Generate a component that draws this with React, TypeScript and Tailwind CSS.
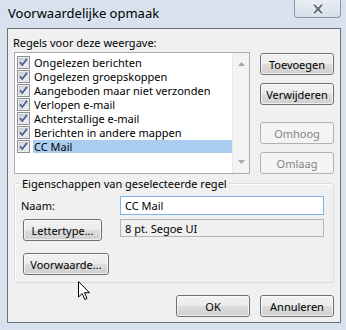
import React from "react";

const FONT = { fontFamily: '"Noto Sans", "Open Sans", sans-serif' };

function CheckBox() {
  return (
    <svg width="13" height="13" viewBox="0 0 13 13" className="shrink-0">
      <defs>
        <linearGradient id="cbg" x1="0" y1="0" x2="1" y2="1">
          <stop offset="0" stopColor="#cbcfd5" />
          <stop offset="1" stopColor="#f6f6f6" />
        </linearGradient>
      </defs>
      <rect x="0.5" y="0.5" width="12" height="12" fill="#fff" stroke="#8e8f8f" />
      <rect x="2" y="2" width="9" height="9" fill="url(#cbg)" stroke="#b0b4ba" strokeWidth="0.5" />
      <path d="M3 6.2 L5.3 9 L10 2.8" fill="none" stroke="#4a5f97" strokeWidth="1.8" strokeLinejoin="round" />
    </svg>
  );
}

function Btn({ children, w = 74, disabled = false }: { children: React.ReactNode; w?: number; disabled?: boolean }) {
  return (
    <div
      className={
        "h-[22px] rounded-[3px] border flex items-center justify-center shrink-0 " +
        (disabled
          ? "border-[#adb2b5] bg-[#f4f4f4] text-[#838383]"
          : "border-[#707070] bg-[linear-gradient(to_bottom,#f2f2f2_0%,#ebebeb_50%,#dddddd_50%,#cfcfcf_100%)] text-black")
      }
      style={{ width: w }}
    >
      <div className={"w-full h-full rounded-[2px] border flex items-center justify-center " + (disabled ? "border-transparent" : "border-[#fcfcfc]/70")}>
        {children}
      </div>
    </div>
  );
}

const items = [
  "Ongelezen berichten",
  "Ongelezen groepskoppen",
  "Aangeboden maar niet verzonden",
  "Verlopen e-mail",
  "Achterstallige e-mail",
  "Berichten in andere mappen",
  "CC Mail",
];

export default function App() {
  return (
    <div className="w-[346px] h-[330px] bg-[#d7e2ee] relative overflow-hidden text-black" style={FONT}>
      {/* title bar */}
      <div className="h-[28px] flex items-start justify-between">
        <div className="pl-[8px] pt-[5px] text-[13px] leading-[16px] text-black">Voorwaardelijke opmaak</div>
        <div className="mr-[5px] w-[47px] h-[18px] rounded-b-[4px] border border-t-0 border-[#8c96a3] bg-[linear-gradient(to_bottom,#e9eef4,#d6dfe9)] flex items-center justify-center">
          <svg width="16" height="12" viewBox="0 0 16 12">
            <path d="M2 1 L5.2 1 L8 4 L10.8 1 L14 1 L10 6 L14 11 L10.8 11 L8 8 L5.2 11 L2 11 L6 6 Z" fill="#6a727d" stroke="#ffffff" strokeWidth="0.8" strokeLinejoin="round" />
          </svg>
        </div>
      </div>

      {/* client area */}
      <div className="ml-[7px] w-[334px] h-[295px] border border-[#6b737c] bg-[#f0f0f0] flex flex-col text-[11px] leading-[15px]">
        <div className="pl-[5px] mt-[6px]">Regels voor deze weergave:</div>
        <div className="flex mt-[2px] ml-[6px]">
          {/* listbox */}
          <div className="w-[236px] h-[122px] border border-[#abadb3] bg-white flex">
            <div className="flex-1 pt-[2px] min-w-0">
              {items.map((t, i) => (
                <div key={t} className="h-[14px] flex items-center pl-[2px]">
                  <CheckBox />
                  <div
                    className={
                      "ml-[3px] flex-1 h-[13px] leading-[13px] flex items-center pl-[1px] whitespace-nowrap " +
                      (i === items.length - 1 ? "bg-[#abcdf0]" : "")
                    }
                  >
                    {t}
                  </div>
                </div>
              ))}
            </div>
            {/* scrollbar */}
            <div className="w-[17px] h-full shrink-0 bg-[#f3f3f3] border-l border-[#e8e8e8] flex flex-col items-center justify-between py-[9px]">
              <svg width="7" height="4" viewBox="0 0 7 4"><path d="M3.5 0 L7 4 L0 4 Z" fill="#a8a8a8" /></svg>
              <svg width="7" height="4" viewBox="0 0 7 4"><path d="M0 0 L7 0 L3.5 4 Z" fill="#a8a8a8" /></svg>
            </div>
          </div>
          {/* right buttons */}
          <div className="ml-[10px] flex flex-col pt-[1px]">
            <Btn>Toevoegen</Btn>
            <div className="mt-[8px]"><Btn>Verwijderen</Btn></div>
            <div className="mt-[17px]"><Btn disabled>Omhoog</Btn></div>
            <div className="mt-[8px]"><Btn disabled>Omlaag</Btn></div>
          </div>
        </div>

        {/* group box */}
        <div className="relative mt-[9px] ml-[6px] w-[320px] h-[100px] rounded-[3px] border border-[#d5dfe5] shadow-[inset_1px_1px_0_#ffffff]">
          <div className="absolute -top-[8px] left-[5px] px-[2px] bg-[#f0f0f0]">Eigenschappen van geselecteerde regel</div>
          <div className="flex items-center mt-[12px] pl-[6px]">
            <div className="w-[99px]">Naam:</div>
            <div className="w-[204px] h-[19px] border border-[#7eb4ea] bg-white flex items-center pl-[4px]">CC Mail</div>
          </div>
          <div className="flex items-start mt-[4px] pl-[8px]">
            <Btn w={79}>Lettertype...</Btn>
            <div className="ml-[18px] w-[204px] h-[18px] border border-[#b5b5b5] bg-[#f0f0f0] flex items-center pl-[4px]">8 pt. Segoe UI</div>
          </div>
          <div className="mt-[12px] pl-[8px]">
            <Btn w={86}>Voorwaarde...</Btn>
          </div>
        </div>

        {/* bottom buttons */}
        <div className="flex justify-end gap-[10px] mt-[12px] pr-[6px]">
          <Btn>OK</Btn>
          <Btn>Annuleren</Btn>
        </div>
      </div>

      {/* mouse cursor */}
      <svg className="absolute left-[78px] top-[281px]" width="13" height="20" viewBox="0 0 13 20">
        <path d="M0.5 0.5 L0.5 16 L4.2 12.5 L6.8 18.5 L9 17.5 L6.5 11.7 L11.5 11.7 Z" fill="#ffffff" stroke="#000000" strokeWidth="1" strokeLinejoin="miter" />
      </svg>
    </div>
  );
}
